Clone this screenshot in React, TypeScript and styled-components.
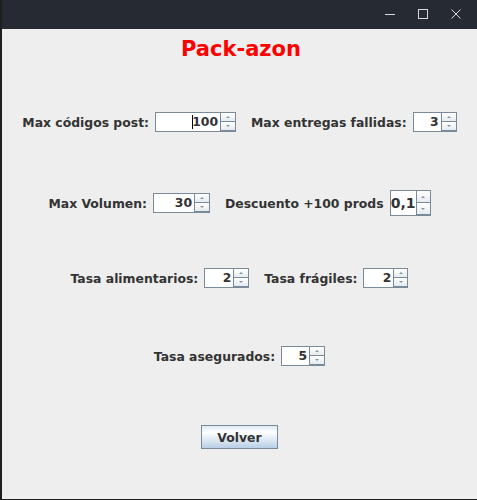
import React from "react";
import styled, { createGlobalStyle } from "styled-components";

const GlobalStyle = createGlobalStyle`
  html, body {
    margin: 0;
    padding: 0;
    background: #1e1e1e;
  }
  body {
    font-family: "DejaVu Sans", "Liberation Sans", sans-serif;
  }
`;

const Window = styled.div`
  width: 477px;
  height: 500px;
  box-sizing: border-box;
  display: flex;
  flex-direction: column;
  border-left: 2px solid #1f1f1f;
  border-bottom: 1px solid #1f1f1f;
  background: #262a33;
`;

const TitleBar = styled.div`
  height: 29px;
  flex-shrink: 0;
  display: flex;
  justify-content: flex-end;
  padding-right: 5px;
  background: #262a33;
`;

const WinButton = styled.div`
  width: 33px;
  height: 27px;
  display: flex;
  align-items: center;
  justify-content: center;
`;

const Content = styled.div`
  flex: 1;
  background: #eeeeee;
  display: flex;
  flex-direction: column;
  align-items: center;
`;

const Title = styled.h1`
  margin: 0 0 0 3px;
  height: 40px;
  display: flex;
  align-items: center;
  font-size: 21px;
  font-weight: bold;
  color: #ff0000;
`;

const Row = styled.div<{ $top: number; $h?: number }>`
  margin-top: ${(p) => p.$top}px;
  height: ${(p) => p.$h ?? 24}px;
  display: flex;
  align-items: center;
  gap: 15px;
`;

const Field = styled.div`
  display: flex;
  align-items: center;
  gap: 6px;
`;

const Label = styled.span`
  font-size: 12.4px;
  font-weight: bold;
  color: #333333;
  white-space: nowrap;
`;

const SpinnerBox = styled.div<{ $h: number }>`
  height: ${(p) => p.$h}px;
  display: flex;
  box-sizing: border-box;
  border: 1px solid #7a8a99;
  border-right: none;
`;

const Editor = styled.div<{ $w: number; $big?: boolean }>`
  width: ${(p) => p.$w}px;
  box-sizing: border-box;
  background: #ffffff;
  display: flex;
  align-items: center;
  justify-content: flex-end;
  padding-right: ${(p) => (p.$big ? 0 : 2)}px;
  font-size: ${(p) => (p.$big ? 14 : 12.4)}px;
  font-weight: bold;
  color: #333333;
  border-bottom: 1px solid #ffffff;
`;

const Caret = styled.span`
  width: 1px;
  height: 14px;
  background: #000000;
  margin-right: -1px;
`;

const Arrows = styled.div<{ $w: number }>`
  width: ${(p) => p.$w}px;
  display: flex;
  flex-direction: column;
`;

const ArrowBtn = styled.div`
  flex: 1;
  box-sizing: border-box;
  border-left: 1px solid #7a8a99;
  border-right: 1px solid #7a8a99;
  border-bottom: 1px solid #7a8a99;
  background: linear-gradient(#ffffff, #e6ebf0);
  display: flex;
  align-items: center;
  justify-content: center;
`;

const Tri = styled.span<{ $up: boolean }>`
  width: 0;
  height: 0;
  border-left: 2px solid transparent;
  border-right: 2px solid transparent;
  ${(p) =>
    p.$up
      ? "border-bottom: 2px solid #8a949e;"
      : "border-top: 2px solid #8a949e;"}
`;

const Button = styled.button`
  width: 77px;
  height: 24px;
  padding: 0;
  border: 1px solid #7a8a99;
  border-radius: 0;
  background: linear-gradient(
    to bottom,
    #dde8f3 0%,
    #ffffff 30%,
    #b8cfe5 100%
  );
  font-family: "DejaVu Sans", "Liberation Sans", sans-serif;
  font-size: 12.4px;
  font-weight: bold;
  color: #333333;
`;

type SpinnerProps = {
  value: string;
  editorWidth: number;
  arrowWidth?: number;
  height?: number;
  big?: boolean;
  caret?: boolean;
};

function Spinner({
  value,
  editorWidth,
  arrowWidth = 16,
  height = 20,
  big,
  caret,
}: SpinnerProps) {
  return (
    <SpinnerBox $h={height}>
      <Editor $w={editorWidth} $big={big}>
        {caret && <Caret />}
        {value}
      </Editor>
      <Arrows $w={arrowWidth}>
        <ArrowBtn>
          <Tri $up />
        </ArrowBtn>
        <ArrowBtn>
          <Tri $up={false} />
        </ArrowBtn>
      </Arrows>
    </SpinnerBox>
  );
}

export default function App() {
  return (
    <>
      <GlobalStyle />
      <Window>
        <TitleBar>
          <WinButton>
            <svg width="10" height="10" viewBox="0 0 10 10">
              <line x1="0" y1="5.5" x2="10" y2="5.5" stroke="#d6d8dc" strokeWidth="1" />
            </svg>
          </WinButton>
          <WinButton>
            <svg width="10" height="10" viewBox="0 0 10 10">
              <rect x="0.5" y="0.5" width="9" height="9" fill="none" stroke="#d6d8dc" strokeWidth="1" />
            </svg>
          </WinButton>
          <WinButton>
            <svg width="10" height="10" viewBox="0 0 10 10">
              <path d="M0.5 0.5 L9.5 9.5 M9.5 0.5 L0.5 9.5" stroke="#d6d8dc" strokeWidth="1" />
            </svg>
          </WinButton>
        </TitleBar>
        <Content>
          <Title>Pack-azon</Title>
          <Row $top={41}>
            <Field>
              <Label>Max códigos post:</Label>
              <Spinner value="100" editorWidth={64} caret />
            </Field>
            <Field>
              <Label>Max entregas fallidas:</Label>
              <Spinner value="3" editorWidth={27} />
            </Field>
          </Row>
          <Row $top={56} $h={26}>
            <Field>
              <Label>Max Volumen:</Label>
              <Spinner value="30" editorWidth={40} />
            </Field>
            <Field>
              <Label>Descuento +100 prods</Label>
              <Spinner value="0,1" editorWidth={25} arrowWidth={15} height={26} big />
            </Field>
          </Row>
          <Row $top={50}>
            <Field>
              <Label>Tasa alimentarios:</Label>
              <Spinner value="2" editorWidth={28} />
            </Field>
            <Field>
              <Label>Tasa frágiles:</Label>
              <Spinner value="2" editorWidth={29} arrowWidth={15} />
            </Field>
          </Row>
          <Row $top={54}>
            <Field>
              <Label>Tasa asegurados:</Label>
              <Spinner value="5" editorWidth={27} />
            </Field>
          </Row>
          <Row $top={57}>
            <Button>Volver</Button>
          </Row>
        </Content>
      </Window>
    </>
  );
}
